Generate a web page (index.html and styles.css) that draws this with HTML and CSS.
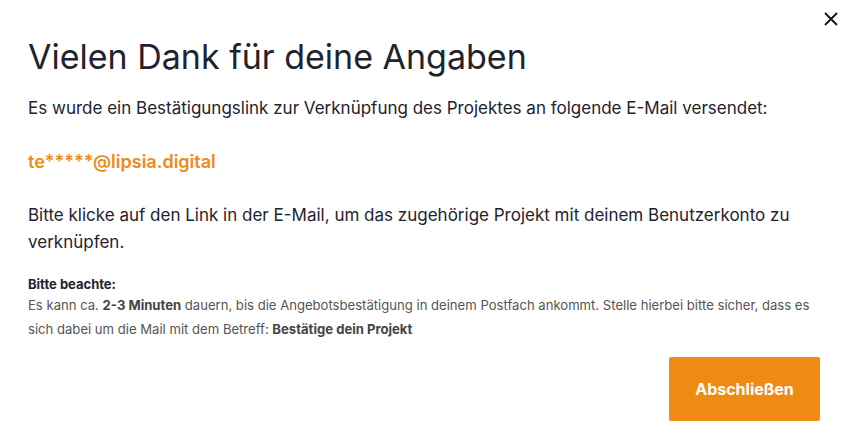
FILE: index.html
```html
<!DOCTYPE html>
<html lang="de">
<head>
<meta charset="utf-8">
<title>Vielen Dank</title>
<link rel="stylesheet" href="styles.css">
</head>
<body>
<div class="modal">
  <button class="close" aria-label="Schließen">
    <svg width="14" height="14" viewBox="0 0 14 14"><path d="M1 1L13 13M13 1L1 13" stroke="#111" stroke-width="1.8" fill="none"/></svg>
  </button>
  <h1 class="title">Vielen Dank für deine Angaben</h1>
  <p class="lead">Es wurde ein Bestätigungslink zur Verknüpfung des Projektes an folgende E-Mail versendet:</p>
  <p class="email">te*****@lipsia.digital</p>
  <p class="lead">Bitte klicke auf den Link in der E-Mail, um das zugehörige Projekt mit deinem Benutzerkonto zu verknüpfen.</p>
  <div class="note">
    <div class="note-title">Bitte beachte:</div>
    <p class="note-text">Es kann ca. <b>2-3 Minuten</b> dauern, bis die Angebotsbestätigung in deinem Postfach ankommt. Stelle hierbei bitte sicher, dass es sich dabei um die Mail mit dem Betreff: <b>Bestätige dein Projekt</b></p>
  </div>
  <div class="actions">
    <button class="btn">Abschließen</button>
  </div>
</div>
</body>
</html>
```
FILE: styles.css
```css
html, body { margin: 0; padding: 0; background: #fff; }
body { font-family: Inter, "Noto Sans", sans-serif; color: #1f232e; }
.modal { position: relative; width: 850px; height: 447px; box-sizing: border-box; padding: 33px 30px 0 28px; }
.close { position: absolute; top: 12px; right: 12px; background: none; border: 0; padding: 0; width: 14px; height: 14px; cursor: pointer; }
.close svg { display: block; }
.title { margin: 0; font-size: 34px; font-weight: 400; line-height: 48px; letter-spacing: 0; }
.lead { margin: 14px 0 0; font-size: 17px; line-height: 27px; }
.email { margin: 26px 0 27px; font-size: 18px; font-weight: 600; color: #ee8a1b; line-height: 27px; }
.note { margin-top: 19px; }
.note-title { font-size: 13px; font-weight: 700; line-height: 18px; }
.note-text { margin: 0; font-size: 13.1px; line-height: 24px; color: #555; }
.note-text b { color: #444; font-weight: 700; }
.actions { display: flex; justify-content: flex-end; margin-top: 16px; }
.btn { width: 151px; height: 64px; background: #ef8a12; color: #fff; border: 0; border-radius: 2px; font-family: inherit; font-size: 16px; font-weight: 700; cursor: pointer; }
```
